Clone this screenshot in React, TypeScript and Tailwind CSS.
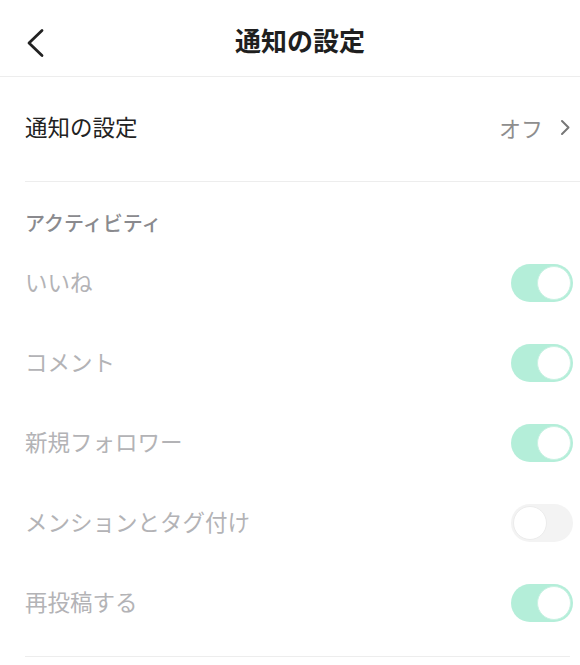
import React from 'react'

const font = { fontFamily: '"Noto Sans CJK JP", "Noto Sans", sans-serif' }

type Item = { label: string; on: boolean }

const items: Item[] = [
  { label: 'いいね', on: true },
  { label: 'コメント', on: true },
  { label: '新規フォロワー', on: true },
  { label: 'メンションとタグ付け', on: false },
  { label: '再投稿する', on: true },
]

function Toggle({ on }: { on: boolean }) {
  return (
    <div
      className={`flex h-[38px] w-[62px] items-center rounded-full p-[2px] ${
        on ? 'justify-end bg-[#b4eed9]' : 'justify-start bg-[#f3f3f3]'
      }`}
    >
      <div
        className={`h-[34px] w-[34px] rounded-full border bg-white ${
          on ? 'border-[#c9f2e3]' : 'border-[#ececec]'
        }`}
      />
    </div>
  )
}

export default function App() {
  return (
    <div className="h-[665px] w-[580px] overflow-hidden bg-white" style={font}>
      <header className="relative flex h-[77px] items-center justify-center border-b border-[#ededed] pl-[20px]">
        <svg
          className="absolute left-[24px] top-[28px]"
          width="24"
          height="30"
          viewBox="0 0 24 30"
          fill="none"
        >
          <path d="M18 2.5 L5 15 L18 27.5" stroke="#222" strokeWidth="2.8" strokeLinecap="round" strokeLinejoin="round" />
        </svg>
        <h1 className="pt-[3px] text-[26px] font-bold leading-none text-[#1f1f1f]">通知の設定</h1>
      </header>

      <div className="flex h-[104px] items-center justify-between pb-[4px] pl-[25px] pr-[9px]">
        <span className="text-[22.5px] text-[#222]">通知の設定</span>
        <div className="flex items-center gap-[17px]">
          <span className="text-[22px] text-[#8e8e8e]">オフ</span>
          <svg width="11" height="17" viewBox="0 0 11 17" fill="none">
            <path d="M2 2 L8.5 8.5 L2 15" stroke="#777" strokeWidth="2" strokeLinecap="round" strokeLinejoin="round" />
          </svg>
        </div>
      </div>

      <div className="ml-[25px] border-t border-[#ededed]" />

      <div className="flex h-[61px] items-end px-[25px] pb-[6px]">
        <span className="text-[20px] font-medium leading-[28px] text-[#8a8a8e]">アクティビティ</span>
      </div>

      {items.map((it) => (
        <div key={it.label} className="flex h-[80px] items-center justify-between pl-[25px] pr-[7px]">
          <span className="pb-[2px] text-[22.5px] text-[#b3b3b6]">{it.label}</span>
          <Toggle on={it.on} />
        </div>
      ))}

      <div className="ml-[25px] mr-[10px] mt-[13px] border-t border-[#ededed]" />
    </div>
  )
}
